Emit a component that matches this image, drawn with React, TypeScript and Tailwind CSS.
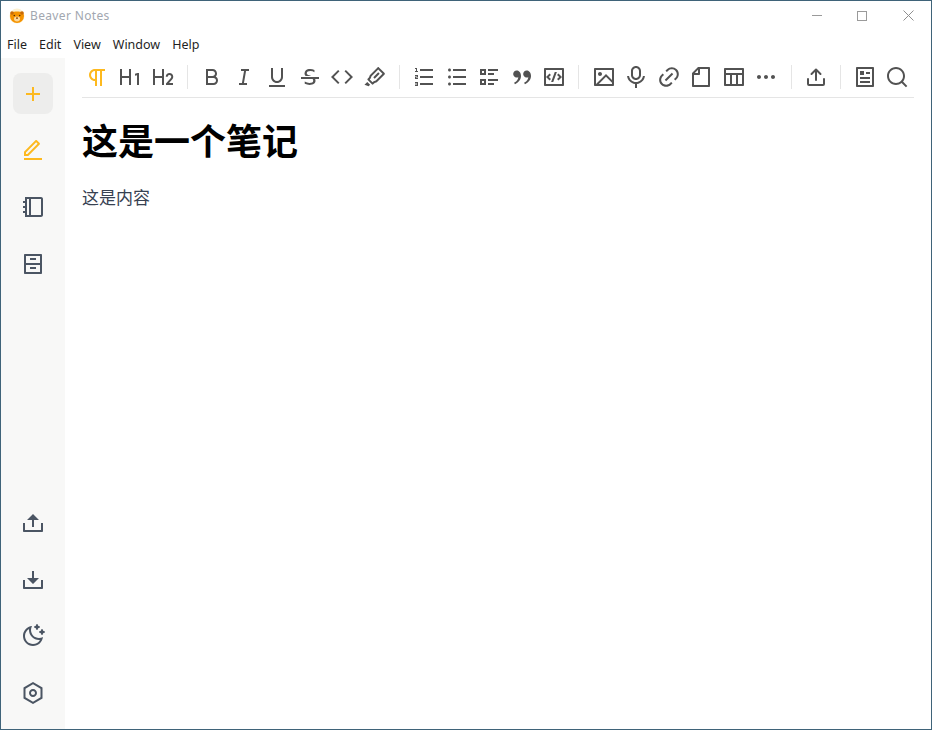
import React from "react";
import {
  RiParagraph, RiH1, RiH2, RiBold, RiItalic, RiUnderline, RiStrikethrough, RiCodeLine, RiMarkPenLine,
  RiListOrdered, RiListUnordered, RiListCheck2, RiDoubleQuotesR, RiCodeBoxLine, RiImageLine, RiMicLine,
  RiLink, RiFileLine, RiTableLine, RiMoreFill, RiUpload2Line, RiDownload2Line, RiArticleLine, RiSearchLine,
  RiAddLine, RiEditLine, RiBookletLine, RiArchiveDrawerLine, RiMoonClearLine, RiSettingsLine,
} from "react-icons/ri";

type IconT = React.ComponentType<{ size?: number; className?: string }>;

const Sep = () => (
  <div className="w-[16.6px] flex justify-center shrink-0">
    <div className="w-px h-6 bg-[#e5e5e5]" />
  </div>
);

const Tool = ({ I, active }: { I: IconT; active?: boolean }) => (
  <div className={`w-[32.6px] shrink-0 flex justify-center ${active ? "text-[#fdb91f]" : "text-[#525252]"}`}>
    <I size={24} />
  </div>
);

const Side = ({ I, cls, box }: { I: IconT; cls?: string; box?: boolean }) => (
  <div className={`w-10 ${box ? "h-[41px] bg-[#ededec]" : "h-10"} flex items-center justify-center rounded-lg ${cls ?? "text-[#4b5563]"}`}>
    <I size={24} />
  </div>
);

const ShareIcon: IconT = ({ size }) => (
  <svg width={size} height={size} viewBox="0 0 24 24" fill="none" stroke="currentColor" strokeWidth="2" strokeLinecap="round" strokeLinejoin="round">
    <path d="M4 14v5a1 1 0 0 0 1 1h14a1 1 0 0 0 1-1v-5" />
    <path d="M12 15V5" />
    <path d="M7.500 9 12 4.500 16.500 9" />
  </svg>
);

const Logo = () => (
  <svg width="16" height="16" viewBox="0 0 16 16">
    <circle cx="8" cy="8" r="7.5" fill="#fdf0d0" />
    <path d="M1 8a7 7 0 0 0 14 0c0-1.500-.6-2.800-1.300-3.500C12 3.500 10 3.400 8 3.400S4 3.500 2.300 4.500C1.600 5.200 1 6.500 1 8z" fill="#f59300" />
    <circle cx="3" cy="5" r="1.800" fill="#c86a06" />
    <circle cx="13" cy="5" r="1.800" fill="#c86a06" />
    <ellipse cx="8" cy="11" rx="3" ry="2.400" fill="#fbd79a" />
    <circle cx="5.300" cy="7.500" r=".8" fill="#4a2a08" />
    <circle cx="10.700" cy="7.500" r=".8" fill="#4a2a08" />
    <rect x="7" y="9.500" width="2" height="1.200" fill="#7a3e08" />
  </svg>
);

export default function App() {
  return (
    <div className="w-[932px] h-[730px] border border-[#3f6379] bg-white flex flex-col overflow-hidden font-['Open_Sans','Noto_Sans_CJK_SC',sans-serif]">
      <div className="h-[29px] shrink-0 flex items-center pl-2">
        <Logo />
        <span className="ml-[5px] text-[12px] tracking-[0.35px] text-[#a2a7b0] font-['Noto_Sans',sans-serif]">Beaver Notes</span>
        <div className="ml-auto flex items-center pr-[17px]">
          <div className="w-[10px] h-px bg-[#9a9a9a]" />
          <div className="ml-[35px] w-[10px] h-[10px] border border-[#9a9a9a]" />
          <svg width="11" height="11" viewBox="0 0 11 11" className="ml-[36px]">
            <path d="M.5.5l10 10M10.500.5l-10 10" stroke="#8f8f8f" strokeWidth="1" fill="none" />
          </svg>
        </div>
      </div>
      <div className="h-[28px] shrink-0 flex items-center gap-3 pl-[6px] pt-[2px] text-[12.5px] text-[#1f1f1f] font-['Noto_Sans',sans-serif]">
        <span>File</span><span>Edit</span><span>View</span><span>Window</span><span>Help</span>
      </div>
      <div className="flex-1 flex min-h-0">
        <aside className="w-16 shrink-0 bg-[#f8f8f7] flex flex-col items-center pt-[15px] pb-4">
          <Side I={RiAddLine} cls="text-[#fdb91f]" box />
          <div className="mt-[16px] flex flex-col gap-[17px]">
            <Side I={RiEditLine} cls="text-[#fdb91f]" />
            <Side I={RiBookletLine} />
            <Side I={RiArchiveDrawerLine} />
          </div>
          <div className="mt-auto flex flex-col gap-[17px]">
            <Side I={RiUpload2Line} />
            <Side I={RiDownload2Line} />
          </div>
          <div className="mt-[16px] flex flex-col gap-[17px]">
            <Side I={RiMoonClearLine} />
            <Side I={RiSettingsLine} />
          </div>
        </aside>
        <main className="flex-1 pl-[17px] pr-[17px] min-w-0">
          <div className="h-[40px] border-b border-[#e5e5e5] flex items-start pt-[7px]">
            <div className="flex -ml-[0.9px]">
              <Tool I={RiParagraph} active /><Tool I={RiH1} /><Tool I={RiH2} />
              <Sep />
              <Tool I={RiBold} /><Tool I={RiItalic} /><Tool I={RiUnderline} /><Tool I={RiStrikethrough} /><Tool I={RiCodeLine} /><Tool I={RiMarkPenLine} />
              <Sep />
              <Tool I={RiListOrdered} /><Tool I={RiListUnordered} /><Tool I={RiListCheck2} /><Tool I={RiDoubleQuotesR} /><Tool I={RiCodeBoxLine} />
              <Sep />
              <Tool I={RiImageLine} /><Tool I={RiMicLine} /><Tool I={RiLink} /><Tool I={RiFileLine} /><Tool I={RiTableLine} /><Tool I={RiMoreFill} />
              <Sep />
              <Tool I={ShareIcon} />
              <Sep />
              <Tool I={RiArticleLine} /><Tool I={RiSearchLine} />
            </div>
          </div>
          <h1 className="mt-[19px] text-[36px] leading-[50px] font-bold text-black">这是一个笔记</h1>
          <p className="mt-[18px] text-[17px] leading-[26px] text-[#374151]">这是内容</p>
        </main>
      </div>
    </div>
  );
}
